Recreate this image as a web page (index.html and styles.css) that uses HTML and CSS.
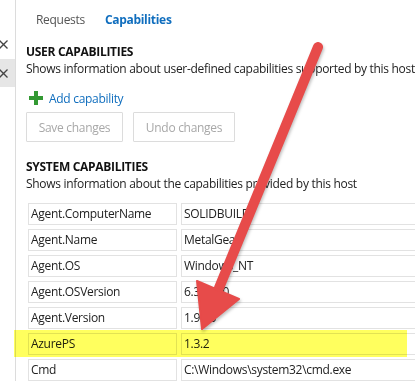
FILE: index.html
```html
<!DOCTYPE html>
<html lang="en">
<head>
    <meta charset="UTF-8">
    <title>Agent capabilities</title>
    <link rel="stylesheet" href="styles.css">
</head>
<body>
    <div class="shell">
        <div class="rail">
            <div class="close-tab">
                <svg width="9" height="9" viewBox="0 0 9 9"><path d="M0.5 0.5 L8.5 8.5 M8.5 0.5 L0.5 8.5" /></svg>
            </div>
            <div class="close-tab active">
                <svg width="9" height="9" viewBox="0 0 9 9"><path d="M0.5 0.5 L8.5 8.5 M8.5 0.5 L0.5 8.5" /></svg>
            </div>
        </div>
        <div class="main">
            <div class="tabs">
                <span class="tab">Requests</span>
                <span class="tab selected">Capabilities</span>
            </div>

            <h2 class="section-title">USER CAPABILITIES</h2>
            <p class="section-desc">Shows information about user-defined capabilities supported by this host</p>
            <a class="add-link" href="#">
                <svg class="plus" width="14" height="14" viewBox="0 0 14 14"><path d="M5 0 H9 V5 H14 V9 H9 V14 H5 V9 H0 V5 H5 Z" /></svg>
                Add capability
            </a>
            <div class="buttons">
                <button class="btn btn-save" disabled>Save changes</button>
                <button class="btn btn-undo" disabled>Undo changes</button>
            </div>

            <h2 class="section-title system">SYSTEM CAPABILITIES</h2>
            <p class="section-desc">Shows information about the capabilities provided by this host</p>
            <div class="cap-table">
                <div class="cell">Agent.ComputerName</div><div class="cell">SOLIDBUILD</div>
                <div class="cell">Agent.Name</div><div class="cell">MetalGear</div>
                <div class="cell">Agent.OS</div><div class="cell">Windows_NT</div>
                <div class="cell">Agent.OSVersion</div><div class="cell">6.3.9600</div>
                <div class="cell">Agent.Version</div><div class="cell">1.95.3</div>
                <div class="cell">AzurePS</div><div class="cell">1.3.2</div>
                <div class="cell">Cmd</div><div class="cell">C:\Windows\system32\cmd.exe</div>
            </div>
        </div>
    </div>

    <!-- annotations drawn over the screenshot -->
    <div class="highlight"></div>
    <svg class="arrow" width="415" height="381" viewBox="0 0 415 381">
        <line x1="318" y1="47" x2="219" y2="288" />
        <polygon points="202,329 197,281 239,299" />
    </svg>
</body>
</html>
```

FILE: styles.css
```css
* {
    margin: 0;
    padding: 0;
    box-sizing: border-box;
}

body {
    font-family: 'Open Sans', 'Noto Sans', sans-serif;
    font-size: 12px;
    letter-spacing: -0.3px;
    color: #222;
    background: #ffffff;
    overflow: hidden;
    height: 381px;
}

.shell {
    display: flex;
    height: 100%;
}

.rail {
    flex: none;
    width: 16px;
    border-right: 1px solid #dcdcdc;
    padding-top: 30px;
    display: flex;
    flex-direction: column;
    gap: 1px;
}

.close-tab {
    height: 28px;
    display: flex;
    align-items: center;
}

.close-tab svg {
    margin-left: -1px;
    stroke: #444;
    stroke-width: 1.3;
}

.close-tab.active {
    background: #e6e6e6;
}

.main {
    flex: 1;
    min-width: 0;
    overflow: hidden;
    padding-left: 10px;
}

.tabs {
    display: flex;
    height: 40px;
    line-height: 40px;
}

.tab {
    padding: 0 10px;
    color: #555;
}

.tab.selected {
    color: #106ebe;
    font-weight: 700;
}

.section-title {
    font-size: 12px;
    font-weight: 700;
    color: #111;
    line-height: 16px;
    margin-top: 4px;
}

.section-title.system {
    margin-top: 17px;
}

.section-desc {
    line-height: 18px;
    white-space: nowrap;
}

.add-link {
    display: flex;
    align-items: center;
    gap: 6px;
    margin-top: 11px;
    height: 18px;
    padding-left: 3px;
    color: #106ebe;
    text-decoration: none;
}

.plus {
    fill: #339933;
}

.buttons {
    display: flex;
    gap: 10px;
    margin-top: 5px;
}

.btn {
    height: 30px;
    padding: 0 6px;
    border: 1px solid #dcdcdc;
    border-radius: 1px;
    background: #ffffff;
    color: #a8a8a8;
    font-family: inherit;
    font-size: 12px;
    letter-spacing: -0.3px;
    white-space: nowrap;
}

.btn-save {
    width: 97px;
}

.btn-undo {
    width: 102px;
}

.cap-table {
    display: grid;
    grid-template-columns: 149px 260px;
    gap: 4px;
    margin-top: 10px;
    margin-left: 2px;
}

.cell {
    height: 22px;
    line-height: 20px;
    border: 1px solid #e2e2e2;
    padding: 0 2px;
    white-space: nowrap;
}

.highlight {
    position: absolute;
    left: 14px;
    top: 330px;
    width: 393px;
    height: 27px;
    background: #ffff5e;
    mix-blend-mode: multiply;
}

.arrow {
    position: absolute;
    left: 0;
    top: 0;
    pointer-events: none;
    filter: drop-shadow(1px 2px 1.5px rgba(0, 0, 0, 0.25));
}

.arrow line {
    stroke: #e74b4a;
    stroke-width: 10;
    stroke-linecap: round;
}

.arrow polygon {
    fill: #e74b4a;
    stroke: #e74b4a;
    stroke-width: 2;
    stroke-linejoin: round;
}
```
